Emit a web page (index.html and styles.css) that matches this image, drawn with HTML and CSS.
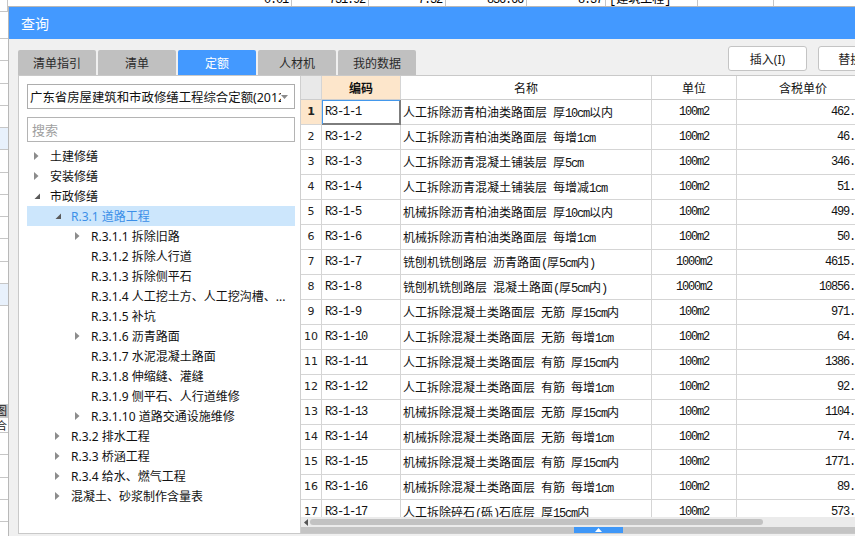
FILE: index.html
```html
<!DOCTYPE html>
<html lang="zh">
<head>
<meta charset="utf-8">
<title>查询</title>
<link rel="stylesheet" href="styles.css">
</head>
<body>
<div class="sheet">
  <div class="sheet-top">
    <div class="sc w8"></div>
    <div class="sc w284">0.01</div>
    <div class="sc w77">731.92</div>
    <div class="sc w77">7.32</div>
    <div class="sc w81">836.66</div>
    <div class="sc w79">8.37</div>
    <div class="sc w92 tl">[建筑工程]</div>
    <div class="sc w76"></div>
    <div class="sc w100"></div>
  </div>
  <div class="sheet-left">
    <div class="sr first"></div>
    <div class="sr"></div><div class="sr"></div><div class="sr"></div><div class="sr"></div>
    <div class="sr hl"></div>
    <div class="sr"></div><div class="sr"></div><div class="sr"></div><div class="sr"></div>
    <div class="sr"></div><div class="sr"></div>
    <div class="sr hl"></div>
    <div class="sgap"></div>
    <div class="stab">图</div>
    <div class="stxt">合</div>
    <div class="sr"></div><div class="sr"></div><div class="sr"></div><div class="sr"></div>
  </div>
</div>

<div class="dialog">
  <div class="titlebar">查询</div>
  <div class="toolbar">
    <div class="tabs">
      <div class="tab">清单指引</div>
      <div class="tab">清单</div>
      <div class="tab active">定额</div>
      <div class="tab">人材机</div>
      <div class="tab">我的数据</div>
    </div>
    <div class="btns">
      <div class="btn">插入(I)</div>
      <div class="btn">替换(R)</div>
    </div>
  </div>
  <div class="content">
    <div class="left">
      <div class="select">
        <span class="select-text">广东省房屋建筑和市政修缮工程综合定额(2012)</span>
        <span class="select-arrow"><svg width="7" height="4" viewBox="0 0 7 4"><polygon points="0,0 7,0 3.5,4" fill="#8a8a8a"/></svg></span>
      </div>
      <div class="search">搜索</div>
      <div class="tree">
        <div class="node l0"><span class="tw"><svg width="5" height="8" viewBox="0 0 5 8"><polygon points="0,0 4.5,4 0,8" fill="#8c8c8c"/></svg></span>土建修缮</div>
        <div class="node l0"><span class="tw"><svg width="5" height="8" viewBox="0 0 5 8"><polygon points="0,0 4.5,4 0,8" fill="#8c8c8c"/></svg></span>安装修缮</div>
        <div class="node l0"><span class="tw"><svg width="7" height="7" viewBox="0 0 7 7"><polygon points="6,0.5 6,6 0.5,6" fill="#5a5a5a"/></svg></span>市政修缮</div>
        <div class="node l1 sel"><span class="tw"><svg width="7" height="7" viewBox="0 0 7 7"><polygon points="6,0.5 6,6 0.5,6" fill="#5a5a5a"/></svg></span>R.3.1 道路工程</div>
        <div class="node l2"><span class="tw"><svg width="5" height="8" viewBox="0 0 5 8"><polygon points="0,0 4.5,4 0,8" fill="#8c8c8c"/></svg></span>R.3.1.1 拆除旧路</div>
        <div class="node l2"><span class="tw"></span>R.3.1.2 拆除人行道</div>
        <div class="node l2"><span class="tw"></span>R.3.1.3 拆除侧平石</div>
        <div class="node l2"><span class="tw"></span>R.3.1.4 人工挖土方、人工挖沟槽、...</div>
        <div class="node l2"><span class="tw"></span>R.3.1.5 补坑</div>
        <div class="node l2"><span class="tw"><svg width="5" height="8" viewBox="0 0 5 8"><polygon points="0,0 4.5,4 0,8" fill="#8c8c8c"/></svg></span>R.3.1.6 沥青路面</div>
        <div class="node l2"><span class="tw"></span>R.3.1.7 水泥混凝土路面</div>
        <div class="node l2"><span class="tw"></span>R.3.1.8 伸缩缝、灌缝</div>
        <div class="node l2"><span class="tw"></span>R.3.1.9 侧平石、人行道维修</div>
        <div class="node l2"><span class="tw"><svg width="5" height="8" viewBox="0 0 5 8"><polygon points="0,0 4.5,4 0,8" fill="#8c8c8c"/></svg></span>R.3.1.10 道路交通设施维修</div>
        <div class="node l1"><span class="tw"><svg width="5" height="8" viewBox="0 0 5 8"><polygon points="0,0 4.5,4 0,8" fill="#8c8c8c"/></svg></span>R.3.2 排水工程</div>
        <div class="node l1"><span class="tw"><svg width="5" height="8" viewBox="0 0 5 8"><polygon points="0,0 4.5,4 0,8" fill="#8c8c8c"/></svg></span>R.3.3 桥涵工程</div>
        <div class="node l1"><span class="tw"><svg width="5" height="8" viewBox="0 0 5 8"><polygon points="0,0 4.5,4 0,8" fill="#8c8c8c"/></svg></span>R.3.4 给水、燃气工程</div>
        <div class="node l1"><span class="tw"><svg width="5" height="8" viewBox="0 0 5 8"><polygon points="0,0 4.5,4 0,8" fill="#8c8c8c"/></svg></span>混凝土、砂浆制作含量表</div>
      </div>
    </div>

    <div class="grid">
      <div class="hrow">
        <div class="cell cn hgray"></div>
        <div class="cell cc hsel">编码</div>
        <div class="cell cname">名称</div>
        <div class="cell cu">单位</div>
        <div class="cell cp">含税单价</div>
        <div class="cell cx"></div>
      </div>
      <div class="body">
        <div class="row"><div class="cell cn num rsel">1</div><div class="cell cc mono csel">R3-1-1</div><div class="cell cname">人工拆除沥青柏油类路面层<span class="m"> </span>厚<span class="m">10cm</span>以内</div><div class="cell cu mono">100m2</div><div class="cell cp mono">462.47</div><div class="cell cx"></div></div>
        <div class="row"><div class="cell cn num">2</div><div class="cell cc mono">R3-1-2</div><div class="cell cname">人工拆除沥青柏油类路面层<span class="m"> </span>每增<span class="m">1cm</span></div><div class="cell cu mono">100m2</div><div class="cell cp mono">46.25</div><div class="cell cx"></div></div>
        <div class="row"><div class="cell cn num">3</div><div class="cell cc mono">R3-1-3</div><div class="cell cname">人工拆除沥青混凝土铺装层<span class="m"> </span>厚<span class="m">5cm</span></div><div class="cell cu mono">100m2</div><div class="cell cp mono">346.29</div><div class="cell cx"></div></div>
        <div class="row"><div class="cell cn num">4</div><div class="cell cc mono">R3-1-4</div><div class="cell cname">人工拆除沥青混凝土铺装层<span class="m"> </span>每增减<span class="m">1cm</span></div><div class="cell cu mono">100m2</div><div class="cell cp mono">51.88</div><div class="cell cx"></div></div>
        <div class="row"><div class="cell cn num">5</div><div class="cell cc mono">R3-1-5</div><div class="cell cname">机械拆除沥青柏油类路面层<span class="m"> </span>厚<span class="m">10cm</span>以内</div><div class="cell cu mono">100m2</div><div class="cell cp mono">499.79</div><div class="cell cx"></div></div>
        <div class="row"><div class="cell cn num">6</div><div class="cell cc mono">R3-1-6</div><div class="cell cname">机械拆除沥青柏油类路面层<span class="m"> </span>每增<span class="m">1cm</span></div><div class="cell cu mono">100m2</div><div class="cell cp mono">50.06</div><div class="cell cx"></div></div>
        <div class="row"><div class="cell cn num">7</div><div class="cell cc mono">R3-1-7</div><div class="cell cname">铣刨机铣刨路层<span class="m"> </span>沥青路面<span class="m">(</span>厚<span class="m">5cm</span>内<span class="m">)</span></div><div class="cell cu mono">1000m2</div><div class="cell cp mono">4615.37</div><div class="cell cx"></div></div>
        <div class="row"><div class="cell cn num">8</div><div class="cell cc mono">R3-1-8</div><div class="cell cname">铣刨机铣刨路层<span class="m"> </span>混凝土路面<span class="m">(</span>厚<span class="m">5cm</span>内<span class="m">)</span></div><div class="cell cu mono">1000m2</div><div class="cell cp mono">10856.20</div><div class="cell cx"></div></div>
        <div class="row"><div class="cell cn num">9</div><div class="cell cc mono">R3-1-9</div><div class="cell cname">人工拆除混凝土类路面层<span class="m"> </span>无筋<span class="m"> </span>厚<span class="m">15cm</span>内</div><div class="cell cu mono">100m2</div><div class="cell cp mono">971.22</div><div class="cell cx"></div></div>
        <div class="row"><div class="cell cn num">10</div><div class="cell cc mono">R3-1-10</div><div class="cell cname">人工拆除混凝土类路面层<span class="m"> </span>无筋<span class="m"> </span>每增<span class="m">1cm</span></div><div class="cell cu mono">100m2</div><div class="cell cp mono">64.75</div><div class="cell cx"></div></div>
        <div class="row"><div class="cell cn num">11</div><div class="cell cc mono">R3-1-11</div><div class="cell cname">人工拆除混凝土类路面层<span class="m"> </span>有筋<span class="m"> </span>厚<span class="m">15cm</span>内</div><div class="cell cu mono">100m2</div><div class="cell cp mono">1386.55</div><div class="cell cx"></div></div>
        <div class="row"><div class="cell cn num">12</div><div class="cell cc mono">R3-1-12</div><div class="cell cname">人工拆除混凝土类路面层<span class="m"> </span>有筋<span class="m"> </span>每增<span class="m">1cm</span></div><div class="cell cu mono">100m2</div><div class="cell cp mono">92.44</div><div class="cell cx"></div></div>
        <div class="row"><div class="cell cn num">13</div><div class="cell cc mono">R3-1-13</div><div class="cell cname">机械拆除混凝土类路面层<span class="m"> </span>无筋<span class="m"> </span>厚<span class="m">15cm</span>内</div><div class="cell cu mono">100m2</div><div class="cell cp mono">1104.36</div><div class="cell cx"></div></div>
        <div class="row"><div class="cell cn num">14</div><div class="cell cc mono">R3-1-14</div><div class="cell cname">机械拆除混凝土类路面层<span class="m"> </span>无筋<span class="m"> </span>每增<span class="m">1cm</span></div><div class="cell cu mono">100m2</div><div class="cell cp mono">74.80</div><div class="cell cx"></div></div>
        <div class="row"><div class="cell cn num">15</div><div class="cell cc mono">R3-1-15</div><div class="cell cname">机械拆除混凝土类路面层<span class="m"> </span>有筋<span class="m"> </span>厚<span class="m">15cm</span>内</div><div class="cell cu mono">100m2</div><div class="cell cp mono">1771.06</div><div class="cell cx"></div></div>
        <div class="row"><div class="cell cn num">16</div><div class="cell cc mono">R3-1-16</div><div class="cell cname">机械拆除混凝土类路面层<span class="m"> </span>有筋<span class="m"> </span>每增<span class="m">1cm</span></div><div class="cell cu mono">100m2</div><div class="cell cp mono">89.52</div><div class="cell cx"></div></div>
        <div class="row"><div class="cell cn num">17</div><div class="cell cc mono">R3-1-17</div><div class="cell cname">人工拆除碎石<span class="m">(</span>砾<span class="m">)</span>石底层<span class="m"> </span>厚<span class="m">15cm</span>内</div><div class="cell cu mono">100m2</div><div class="cell cp mono">573.18</div><div class="cell cx"></div></div>
      </div>
      <div class="hscroll">
        <span class="sarrow"><svg width="4" height="7" viewBox="0 0 4 7"><polygon points="4,0 0,3.5 4,7" fill="#555"/></svg></span>
        <span class="thumb"></span>
      </div>
      <div class="splitter"><span class="grip"><svg width="7" height="4" viewBox="0 0 7 4"><polygon points="0,4 3.5,0 7,4" fill="#fff"/></svg></span></div>
    </div>
  </div>
</div>
</body>
</html>
```

FILE: styles.css
```css
html, body {
  margin: 0;
  padding: 0;
}
body {
  width: 855px;
  height: 536px;
  overflow: hidden;
  position: relative;
  background: #fff;
  font-family: "Noto Sans", "Noto Sans CJK SC", sans-serif;
  color: #1a1a1a;
}

/* background spreadsheet */
.sheet {
  position: absolute;
  left: 0;
  top: 0;
  width: 855px;
  height: 536px;
}
.sheet-top {
  display: flex;
  height: 22px;
  margin-top: -10px;
  border-bottom: 1px solid #c6c6c6;
  box-sizing: border-box;
}
.sc {
  flex: none;
  box-sizing: border-box;
  border-right: 1px solid #c6c6c6;
  font: 12px "Liberation Mono", monospace;
  letter-spacing: -1.2px;
  text-align: right;
  padding: 3px 3px 0 0;
  line-height: 14px;
  white-space: nowrap;
  overflow: hidden;
  color: #000;
}
.sc.tl { text-align: left; padding-left: 3px; font-family: "Liberation Mono", "Noto Sans CJK SC", monospace; letter-spacing: 0; }
.w8 { width: 8px; }
.w284 { width: 284px; }
.w77 { width: 77px; }
.w81 { width: 81px; }
.w79 { width: 79px; }
.w92 { width: 92px; }
.w76 { width: 76px; }
.w100 { width: 100px; }

.sheet-left {
  position: absolute;
  left: 0;
  top: 12px;
  width: 9px;
  height: 524px;
  box-sizing: border-box;
  border-right: 1px solid #c6c6c6;
  display: flex;
  flex-direction: column;
}
.sr {
  flex: none;
  height: 22.25px;
  box-sizing: border-box;
  border-bottom: 1px solid #c6c6c6;
}
.sr.first { height: 27px; }
.sr.hl { background: #e8f1fc; }
.sgap { flex: none; height: 98px; }
.stab {
  flex: none;
  height: 14px;
  background: #c8c8c8;
  font-size: 11px;
  line-height: 14px;
  overflow: hidden;
  text-indent: -4px;
}
.stxt {
  flex: none;
  height: 15px;
  font-size: 11px;
  line-height: 15px;
  overflow: hidden;
  text-indent: -4px;
  border-bottom: 1px solid #c6c6c6;
  box-sizing: border-box;
}

/* dialog */
.dialog {
  position: absolute;
  left: 8px;
  top: 6px;
  width: 900px;
  height: 540px;
  box-sizing: border-box;
  border: 1px solid #b8b8b8;
  background: #f0f0f0;
  display: flex;
  flex-direction: column;
}
.titlebar {
  flex: none;
  height: 32px;
  background: #4399ff;
  color: #fff;
  font-size: 14px;
  padding-left: 12px;
  display: flex;
  align-items: center;
  font-family: "Noto Sans CJK SC", sans-serif;
}
.toolbar {
  flex: none;
  height: 29px;
  margin-top: 7px;
  padding: 0 10px 0 9px;
  display: flex;
  align-items: flex-end;
  justify-content: space-between;
}
.tabs {
  display: flex;
  gap: 2px;
}
.tab {
  width: 78px;
  height: 25px;
  background: #c0c0c0;
  border-radius: 2px 2px 0 0;
  font-size: 12px;
  color: #2a2a2a;
  display: flex;
  align-items: center;
  justify-content: center;
  font-family: "Noto Sans CJK SC", sans-serif;
}
.tab.active {
  background: #4399ff;
  color: #fff;
}
.btns {
  display: flex;
  gap: 11px;
  margin-bottom: 4px;
}
.btn {
  width: 79px;
  height: 25px;
  box-sizing: border-box;
  border: 1px solid #c4c4c4;
  border-radius: 3px;
  background: #fff;
  font-size: 12px;
  color: #222;
  display: flex;
  align-items: center;
  justify-content: center;
}

.content {
  flex: none;
  height: 459px;
  margin-left: 9px;
  box-sizing: border-box;
  border: 1px solid #c9c9c9;
  background: #fff;
  display: flex;
}

/* left panel */
.left {
  flex: none;
  width: 282px;
  box-sizing: border-box;
  border-right: 1px solid #cfcfcf;
  padding: 8px 5px 0 8px;
}
.select {
  height: 25px;
  box-sizing: border-box;
  border: 1px solid #adadad;
  display: flex;
  align-items: center;
  padding-left: 2px;
  background: #fff;
}
.select-text {
  flex: 1;
  overflow: hidden;
  white-space: nowrap;
  font-size: 12.4px;
  color: #111;
  font-family: "Noto Sans", "Noto Sans CJK SC", sans-serif;
}
.select-arrow {
  flex: none;
  width: 13px;
  display: flex;
  align-items: center;
  justify-content: flex-start;
}
.search {
  margin-top: 8px;
  height: 25px;
  box-sizing: border-box;
  border: 1px solid #b4b4b4;
  font-size: 13px;
  color: #a0a0a0;
  padding-left: 4px;
  display: flex;
  align-items: center;
  font-family: "Noto Sans CJK SC", sans-serif;
}
.tree {
  margin-top: 4px;
}
.node {
  height: 20px;
  display: flex;
  align-items: center;
  font-size: 12px;
  white-space: nowrap;
  color: #111;
}
.node.l0 { padding-left: 7px; }
.node.l1 { padding-left: 28px; }
.node.l2 { padding-left: 48px; }
.node.sel {
  background: #cce6fc;
  color: #3b8fe8;
}
.tw {
  flex: none;
  width: 16px;
  height: 20px;
  display: flex;
  align-items: center;
}

/* grid */
.grid {
  flex: 1;
  min-width: 0;
  display: flex;
  flex-direction: column;
  overflow: hidden;
}
.hrow {
  flex: none;
  display: flex;
  height: 24px;
}
.body {
  flex: none;
  height: 417px;
  overflow: hidden;
}
.row {
  display: flex;
  height: 25px;
}
.cell {
  flex: none;
  box-sizing: border-box;
  height: 100%;
  border-right: 1px solid #d5d5d5;
  border-bottom: 1px solid #d5d5d5;
  line-height: 24px;
  white-space: pre;
  overflow: hidden;
  font-size: 12px;
  color: #111;
  font-family: "Noto Sans CJK SC", sans-serif;
}
.cn { width: 21px; text-align: center; }
.cc { width: 79px; padding-left: 3px; }
.cname { width: 251px; padding-left: 2px; }
.cu { width: 85px; text-align: center; }
.cp { width: 133px; text-align: right; padding-right: 2px; }
.cx { width: 200px; }
.mono {
  font-family: "Liberation Mono", monospace;
  letter-spacing: -1.2px;
}
.num {
  font-family: "DejaVu Sans", sans-serif;
  font-size: 11px;
  color: #222;
}
.m {
  font-family: "Liberation Mono", monospace;
  letter-spacing: -1.2px;
}
.hrow .cell {
  text-align: center;
  padding: 0;
  line-height: 23px;
  border-bottom-color: #cdcdcd;
}
.hgray { background: #e9e9e9; }
.hsel { background: #fde6cb; font-weight: bold; }
.rsel { background: #fde6cb; font-weight: bold; }
.csel {
  box-shadow: inset 1px 1px 0 #4398ec, inset -1px -1px 0 #7d7d7d;
  border-right-color: #7d7d7d;
  border-bottom-color: #7d7d7d;
}

.hscroll {
  flex: none;
  height: 10px;
  background: #ebebeb;
  display: flex;
  align-items: center;
}
.sarrow {
  flex: none;
  width: 9px;
  display: flex;
  justify-content: center;
}
.thumb {
  flex: none;
  width: 453px;
  height: 6px;
  border-radius: 3px;
  background: #c2c2c2;
}
.splitter {
  flex: none;
  height: 6px;
  background: #c4c4c4;
  padding-left: 273px;
  display: flex;
}
.grip {
  width: 49px;
  height: 6px;
  background: #3f97f7;
  display: flex;
  align-items: center;
  justify-content: center;
}
```
